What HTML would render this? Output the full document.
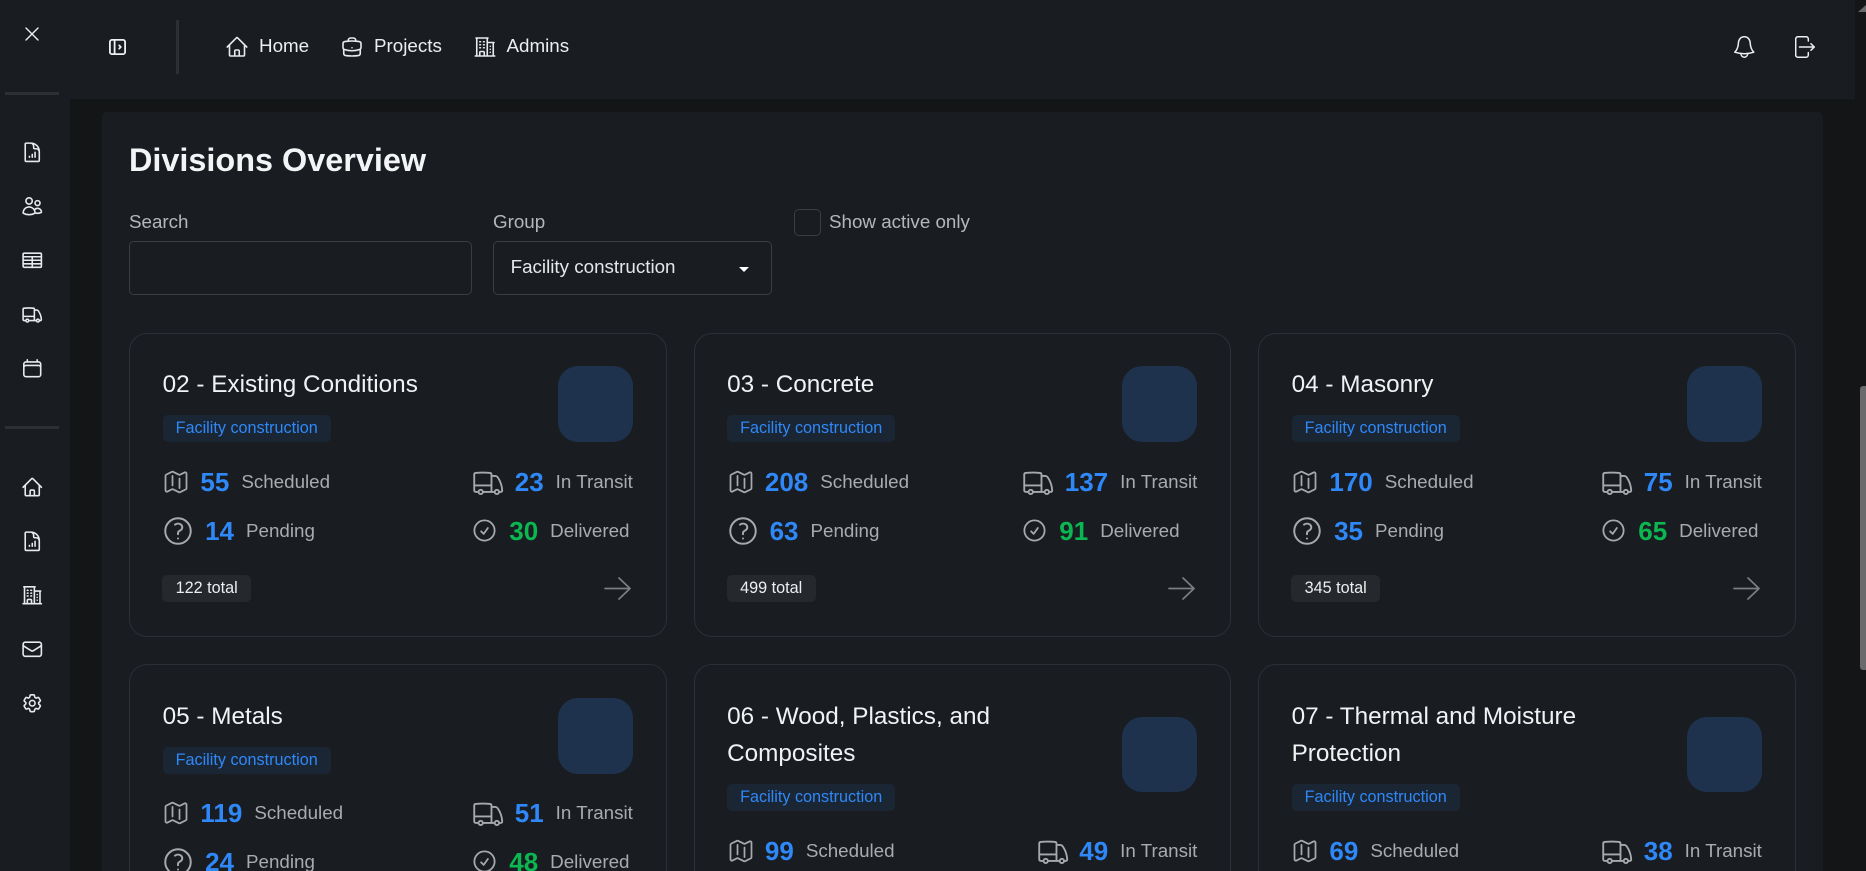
<!DOCTYPE html>
<html lang="en">
<head>
<meta charset="utf-8">
<title>Divisions Overview</title>
<style>
*{box-sizing:border-box}
html,body{margin:0;padding:0;width:1866px;height:871px;overflow:hidden;background:#131517;font-family:"Liberation Sans",sans-serif}
#root{position:relative;width:1866px;height:871px;overflow:hidden;background:#131517}
svg{display:block;fill:none;stroke:currentColor;stroke-linecap:round;stroke-linejoin:round}
.abs{position:absolute}
#side{position:absolute;left:0;top:0;width:70px;height:871px;background:#191c21}
#head{position:absolute;left:70px;top:0;width:1785px;height:99px;background:#191c21}
.sbar{position:absolute;left:5px;width:54px;height:3px;background:#2c2f34}
.si{position:absolute;left:20.75px;width:22.5px;height:22.5px;color:#e8eaed;stroke-width:1.7}
.nav{position:absolute;top:33.8px;line-height:24px;font-size:18.8px;color:#eceef1;white-space:nowrap}
.ni{position:absolute;top:35px;width:24px;height:24px;color:#e8eaed;stroke-width:1.6}
#panel{position:absolute;left:102px;top:112px;width:1721px;height:759px;background:#191c21;border-radius:5px 5px 0 0}
.lab{position:absolute;font-size:18.8px;line-height:24px;color:#b5b7ba;white-space:nowrap}
.inp{position:absolute;top:241px;height:53.7px;border:1px solid #3a3d42;border-radius:5px}
#grid{position:absolute;left:129px;top:333.3px;width:1666.5px;display:grid;grid-template-columns:repeat(3,1fr);grid-template-rows:303.4px auto;gap:27.6px 27px}
.card{border:1px solid #2c2f35;border-radius:18px;padding:31.8px 32.6px 30px 32.6px;background:#191c21;position:relative;min-width:0}
.card.lo{padding-top:32.8px}
.top{display:flex;justify-content:space-between;align-items:center}
.tt{font-size:24.3px;line-height:37px;color:#f1f2f4;white-space:nowrap}
.bd{display:inline-block;margin-top:12px;height:27px;line-height:26px;padding:0 13px;background:#1b2634;color:#2f88f8;font-size:16.2px;border-radius:5px;white-space:nowrap}
.av{width:75px;height:75.7px;border-radius:20px;background:#1e324e;flex:none}
.stats{display:flex;justify-content:space-between;margin-top:25px}
.col{display:flex;flex-direction:column;gap:18.5px}
.r{display:flex;align-items:center;height:30px;color:#a7a9ac}
.r b{font-size:26px;color:#2f88f8;line-height:30px;margin-right:12px}
.r b.g{color:#0bb750}
.r span{font-size:18.8px;color:#a9abae;line-height:24px;white-space:nowrap}
.i1{width:28px;height:28px;margin-left:-.5px;margin-right:10.3px;stroke-width:1.5}
.i2{width:34px;height:34px;margin-left:-1.5px;margin-right:10px;stroke-width:1.4}
.i3{width:34.5px;height:34.5px;margin-right:9px;stroke-width:1.3}
.i4{width:27px;height:27px;margin-right:11px;stroke-width:1.6}
.foot{position:absolute;left:32.3px;top:240.5px;height:27px;line-height:26px;padding:0 13.3px;background:#25282d;color:#eceef0;font-size:16.2px;border-radius:5px;white-space:nowrap}
.arr{position:absolute;right:35px;top:242.5px;width:27px;height:23px;color:#7c7e82;stroke-width:1.7}
#track{position:absolute;left:1855px;top:0;width:11px;height:871px;background:#131517}
#thumb{position:absolute;left:1860px;top:386px;width:6px;height:284px;background:#6a6a6c;border-radius:3px 0 0 3px}
#tri{position:absolute;left:1858px;top:5px;width:0;height:0;border-left:8px solid transparent;border-bottom:7px solid #6a6a6c}
</style>
</head>
<body>
<div id="root">
<svg width="0" height="0" style="position:absolute">
<defs>
<symbol id="home" viewBox="0 0 24 24"><path d="M2.25 12l8.954-8.955c.44-.439 1.152-.439 1.591 0L21.75 12M4.5 9.75v10.125c0 .621.504 1.125 1.125 1.125H9.75v-4.875c0-.621.504-1.125 1.125-1.125h2.25c.621 0 1.125.504 1.125 1.125V21h4.125c.621 0 1.125-.504 1.125-1.125V9.75M8.25 21h8.25"/></symbol>
<symbol id="brief" viewBox="0 0 24 24"><path d="M20.25 14.15v4.25c0 1.094-.787 2.036-1.872 2.18-2.087.277-4.216.42-6.378.42s-4.291-.143-6.378-.42c-1.085-.144-1.872-1.086-1.872-2.18v-4.25m16.5 0a2.18 2.18 0 00.75-1.661V8.706c0-1.081-.768-2.015-1.837-2.175a48.114 48.114 0 00-3.413-.387m4.5 8.006c-.194.165-.42.295-.673.38A23.978 23.978 0 0112 15.75c-2.648 0-5.195-.429-7.577-1.22a2.016 2.016 0 01-.673-.38m0 0A2.18 2.18 0 013 12.489V8.706c0-1.081.768-2.015 1.837-2.175a48.111 48.111 0 013.413-.387m7.5 0V5.25A2.25 2.25 0 0013.5 3h-3a2.25 2.25 0 00-2.25 2.25v.894m7.5 0a48.667 48.667 0 00-7.5 0M12 12.75h.008v.008H12v-.008z"/></symbol>
<symbol id="bldg" viewBox="0 0 24 24"><path d="M2.25 21h19.5m-18-18v18m10.5-18v18m6-13.5V21M6.75 6.75h.75m-.75 3h.75m-.75 3h.75m3-6h.75m-.75 3h.75m-.75 3h.75M6.75 21v-3.375c0-.621.504-1.125 1.125-1.125h2.25c.621 0 1.125.504 1.125 1.125V21M3 3h12m-.75 4.5H21m-3.75 3.75h.008v.008h-.008v-.008zm0 3h.008v.008h-.008v-.008zm0 3h.008v.008h-.008v-.008z"/></symbol>
<symbol id="map" viewBox="0 0 24 24"><path d="M9 6.75V15m6-6v8.25m.503 3.498l4.875-2.437c.381-.19.622-.58.622-1.006V4.82c0-.836-.88-1.38-1.628-1.006l-3.869 1.934c-.317.159-.69.159-1.006 0L9.503 3.252a1.125 1.125 0 00-1.006 0L3.622 5.689C3.24 5.88 3 6.27 3 6.695V19.18c0 .836.88 1.38 1.628 1.006l3.869-1.934c.317-.159.69-.159 1.006 0l4.994 2.497c.317.158.69.158 1.006 0z"/></symbol>
<symbol id="truck" viewBox="0 0 24 24"><path d="M8.25 18.75a1.5 1.5 0 01-3 0m3 0a1.5 1.5 0 00-3 0m3 0h6m-9 0H3.375a1.125 1.125 0 01-1.125-1.125V14.25m17.25 4.5a1.5 1.5 0 01-3 0m3 0a1.5 1.5 0 00-3 0m3 0h1.125c.621 0 1.129-.504 1.09-1.124a17.902 17.902 0 00-3.213-9.193 2.056 2.056 0 00-1.58-.86H14.25M16.5 18.75h-2.25m0-11.177v-.958c0-.568-.422-1.048-.987-1.106a48.554 48.554 0 00-10.026 0 1.106 1.106 0 00-.987 1.106v7.635m12-6.677v6.677m0 4.5v-4.5m0 0h-12"/></symbol>
<symbol id="q" viewBox="0 0 24 24"><path d="M9.879 7.519c1.171-1.025 3.071-1.025 4.242 0 1.172 1.025 1.172 2.687 0 3.712-.203.179-.43.326-.67.442-.745.361-1.45.999-1.45 1.827v.75M21 12a9 9 0 11-18 0 9 9 0 0118 0zm-9 5.25h.008v.008H12v-.008z"/></symbol>
<symbol id="ok" viewBox="0 0 24 24"><path d="M9 12.75L11.25 15 15 9.75M21 12a9 9 0 11-18 0 9 9 0 0118 0z"/></symbol>
<symbol id="gear" viewBox="0 0 24 24"><path d="M9.594 3.94c.09-.542.56-.94 1.11-.94h2.593c.55 0 1.02.398 1.11.94l.213 1.281c.063.374.313.686.645.87.074.04.147.083.22.127.324.196.72.257 1.075.124l1.217-.456a1.125 1.125 0 011.37.49l1.296 2.247a1.125 1.125 0 01-.26 1.431l-1.003.827c-.293.24-.438.613-.431.992a6.759 6.759 0 010 .255c-.007.378.138.75.43.99l1.005.828c.424.35.534.954.26 1.43l-1.298 2.247a1.125 1.125 0 01-1.369.491l-1.217-.456c-.355-.133-.75-.072-1.076.124a6.57 6.57 0 01-.22.128c-.331.183-.581.495-.644.869l-.213 1.28c-.09.543-.56.941-1.11.941h-2.594c-.55 0-1.02-.398-1.11-.94l-.213-1.281c-.062-.374-.312-.686-.644-.87a6.52 6.52 0 01-.22-.127c-.325-.196-.72-.257-1.076-.124l-1.217.456a1.125 1.125 0 01-1.369-.49l-1.297-2.247a1.125 1.125 0 01.26-1.431l1.004-.827c.292-.24.437-.613.43-.992a6.932 6.932 0 010-.255c.007-.378-.138-.75-.43-.99l-1.004-.828a1.125 1.125 0 01-.26-1.43l1.297-2.247a1.125 1.125 0 011.37-.491l1.216.456c.356.133.751.072 1.076-.124.072-.044.146-.087.22-.128.332-.183.582-.495.644-.869l.214-1.281z"/><path d="M15 12a3 3 0 11-6 0 3 3 0 016 0z"/></symbol>
<symbol id="mail" viewBox="0 0 24 24"><path d="M21.75 6.75v10.5a2.25 2.25 0 01-2.25 2.25h-15a2.25 2.25 0 01-2.25-2.25V6.75m19.5 0A2.25 2.25 0 0019.5 4.5h-15a2.25 2.25 0 00-2.25 2.25m19.5 0v.243a2.25 2.25 0 01-1.07 1.916l-7.5 4.615a2.25 2.25 0 01-2.36 0L3.32 8.91a2.25 2.25 0 01-1.07-1.916V6.75"/></symbol>
<symbol id="users" viewBox="0 0 24 24"><path d="M15 19.128a9.38 9.38 0 002.625.372 9.337 9.337 0 004.121-.952 4.125 4.125 0 00-7.533-2.493M15 19.128v-.003c0-1.113-.285-2.16-.786-3.07M15 19.128v.106A12.318 12.318 0 018.624 21c-2.331 0-4.512-.645-6.374-1.766l-.001-.109a6.375 6.375 0 0111.964-3.07M12 6.375a3.375 3.375 0 11-6.75 0 3.375 3.375 0 016.75 0zm8.25 2.25a2.625 2.625 0 11-5.25 0 2.625 2.625 0 015.25 0z"/></symbol>
<symbol id="table" viewBox="0 0 24 24"><rect x="2.25" y="4.5" width="19.5" height="15" rx="1.125"/><path d="M2.25 8.25h19.5M2.25 12h19.5M2.25 15.75h19.5M12 8.25V19.5"/></symbol>
<symbol id="cal" viewBox="0 0 24 24"><path d="M6.75 3v2.25M17.25 3v2.25M3 18.75V7.5a2.25 2.25 0 012.25-2.25h13.5A2.25 2.25 0 0121 7.5v11.25m-18 0A2.25 2.25 0 005.25 21h13.5A2.25 2.25 0 0021 18.75m-18 0v-7.5A2.25 2.25 0 015.25 9h13.5A2.25 2.25 0 0121 11.25v7.5"/></symbol>
<symbol id="doc" viewBox="0 0 24 24"><path d="M19.5 14.25v-2.625a3.375 3.375 0 00-3.375-3.375h-1.5A1.125 1.125 0 0113.5 7.125v-1.5a3.375 3.375 0 00-3.375-3.375H8.25M9 16.5v.75m3-3v3M15 12v5.25m-4.5-15H5.625c-.621 0-1.125.504-1.125 1.125v17.25c0 .621.504 1.125 1.125 1.125h12.75c.621 0 1.125-.504 1.125-1.125V11.25a9 9 0 00-9-9z"/></symbol>
<symbol id="arrow" viewBox="0 0 27 23"><path d="M1 11.5h25M15 1l11 10.5L15 22"/></symbol>
</defs>
</svg>

<div id="track"></div>
<div id="tri"></div>
<div id="thumb"></div>

<div id="head"></div>
<div id="side"></div>

<svg class="abs" style="left:24px;top:26px;width:16px;height:16px;color:#eceef1;stroke-width:1.4" viewBox="0 0 16 16"><path d="M2 2l12 12M14 2L2 14"/></svg>
<div class="sbar" style="top:92px"></div>
<svg class="si" style="top:140.7px"><use href="#doc"/></svg>
<svg class="si" style="top:194.7px"><use href="#users"/></svg>
<svg class="si" style="top:248.8px"><use href="#table"/></svg>
<svg class="si" style="top:303.3px"><use href="#truck"/></svg>
<svg class="si" style="top:357.4px"><use href="#cal"/></svg>
<div class="sbar" style="top:426px"></div>
<svg class="si" style="top:475.5px"><use href="#home"/></svg>
<svg class="si" style="top:530px"><use href="#doc"/></svg>
<svg class="si" style="top:584px"><use href="#bldg"/></svg>
<svg class="si" style="top:638px"><use href="#mail"/></svg>
<svg class="si" style="top:692px"><use href="#gear"/></svg>

<svg class="abs" style="left:109px;top:39px;width:17px;height:16px;color:#eef0f2;stroke-width:1.8" viewBox="0 0 17 16"><rect x=".9" y=".9" width="15.2" height="14.2" rx="2"/><path d="M5.6 .9v14.2M10.2 6.4l1.6 1.6-1.6 1.6"/></svg>
<div class="abs" style="left:176px;top:20px;width:3px;height:54px;background:#2c2f34"></div>

<svg class="ni" style="left:225px"><use href="#home"/></svg>
<div class="nav" style="left:259px">Home</div>
<svg class="ni" style="left:340px"><use href="#brief"/></svg>
<div class="nav" style="left:374px">Projects</div>
<svg class="ni" style="left:473px"><use href="#bldg"/></svg>
<div class="nav" style="left:506.5px">Admins</div>

<svg class="abs" style="left:1734px;top:36px;width:21px;height:22px;color:#eceef1;stroke-width:1.5" viewBox="0 0 21 22"><path d="M10.3 .8C6.6 .8 4.6 3.6 4.4 7c-.2 4-1 6.6-3.6 9.2 3 1 6.2 1.5 9.5 1.5s6.5-.5 9.5-1.5c-2.6-2.6-3.4-5.2-3.6-9.2C16 3.6 14 .8 10.3 .8zM6.8 17.4c.2 2.2 1.6 3.8 3.5 3.8s3.3-1.6 3.5-3.8"/></svg>
<svg class="abs" style="left:1795px;top:36px;width:20px;height:22px;color:#eceef1;stroke-width:1.5" viewBox="0 0 20 22"><path d="M13.3 5V3A2.3 2.3 0 0 0 11 .7H3A2.3 2.3 0 0 0 .7 3v16A2.3 2.3 0 0 0 3 21.3h8a2.3 2.3 0 0 0 2.3-2.3v-2.5M4.5 11h14.8M16 7.8l3.3 3.2-3.3 3.2"/></svg>

<div id="panel"></div>

<div class="abs" style="left:129px;top:139.8px;line-height:40px;font-size:32.4px;font-weight:bold;color:#f3f4f6;white-space:nowrap">Divisions Overview</div>

<div class="lab" style="left:129px;top:209.8px">Search</div>
<div class="inp" style="left:129px;width:343px"></div>
<div class="lab" style="left:493px;top:209.8px">Group</div>
<div class="inp" style="left:493px;width:278.7px"></div>
<div class="abs" style="left:510.6px;top:254.8px;line-height:24px;font-size:18.8px;color:#e6e7e9;white-space:nowrap">Facility construction</div>
<div class="abs" style="left:739px;top:266.7px;width:0;height:0;border-left:5px solid transparent;border-right:5px solid transparent;border-top:5.5px solid #fff"></div>
<div class="abs" style="left:794px;top:209px;width:27px;height:27px;border:1px solid #3a3d42;border-radius:5px"></div>
<div class="lab" style="left:829px;top:209.5px">Show active only</div>

<div id="grid">

<div class="card">
<div class="top"><div><div class="tt">02 - Existing Conditions</div><div class="bd">Facility construction</div></div><div class="av"></div></div>
<div class="stats">
<div class="col">
<div class="r"><svg class="i1"><use href="#map"/></svg><b>55</b><span>Scheduled</span></div>
<div class="r"><svg class="i2"><use href="#q"/></svg><b>14</b><span>Pending</span></div>
</div>
<div class="col">
<div class="r"><svg class="i3"><use href="#truck"/></svg><b>23</b><span>In Transit</span></div>
<div class="r"><svg class="i4"><use href="#ok"/></svg><b class="g">30</b><span>Delivered</span></div>
</div>
</div>
<div class="foot">122 total</div>
<svg class="arr"><use href="#arrow"/></svg>
</div>

<div class="card">
<div class="top"><div><div class="tt">03 - Concrete</div><div class="bd">Facility construction</div></div><div class="av"></div></div>
<div class="stats">
<div class="col">
<div class="r"><svg class="i1"><use href="#map"/></svg><b>208</b><span>Scheduled</span></div>
<div class="r"><svg class="i2"><use href="#q"/></svg><b>63</b><span>Pending</span></div>
</div>
<div class="col">
<div class="r"><svg class="i3"><use href="#truck"/></svg><b>137</b><span>In Transit</span></div>
<div class="r"><svg class="i4"><use href="#ok"/></svg><b class="g">91</b><span>Delivered</span></div>
</div>
</div>
<div class="foot">499 total</div>
<svg class="arr"><use href="#arrow"/></svg>
</div>

<div class="card">
<div class="top"><div><div class="tt">04 - Masonry</div><div class="bd">Facility construction</div></div><div class="av"></div></div>
<div class="stats">
<div class="col">
<div class="r"><svg class="i1"><use href="#map"/></svg><b>170</b><span>Scheduled</span></div>
<div class="r"><svg class="i2"><use href="#q"/></svg><b>35</b><span>Pending</span></div>
</div>
<div class="col">
<div class="r"><svg class="i3"><use href="#truck"/></svg><b>75</b><span>In Transit</span></div>
<div class="r"><svg class="i4"><use href="#ok"/></svg><b class="g">65</b><span>Delivered</span></div>
</div>
</div>
<div class="foot">345 total</div>
<svg class="arr"><use href="#arrow"/></svg>
</div>

<div class="card lo">
<div class="top"><div><div class="tt">05 - Metals</div><div class="bd">Facility construction</div></div><div class="av"></div></div>
<div class="stats" style="margin-top:24px">
<div class="col">
<div class="r"><svg class="i1"><use href="#map"/></svg><b>119</b><span>Scheduled</span></div>
<div class="r"><svg class="i2"><use href="#q"/></svg><b>24</b><span>Pending</span></div>
</div>
<div class="col">
<div class="r"><svg class="i3"><use href="#truck"/></svg><b>51</b><span>In Transit</span></div>
<div class="r"><svg class="i4"><use href="#ok"/></svg><b class="g">48</b><span>Delivered</span></div>
</div>
</div>
</div>

<div class="card lo">
<div class="top"><div><div class="tt">06 - Wood, Plastics, and<br>Composites</div><div class="bd">Facility construction</div></div><div class="av"></div></div>
<div class="stats">
<div class="col">
<div class="r"><svg class="i1"><use href="#map"/></svg><b>99</b><span>Scheduled</span></div>
</div>
<div class="col">
<div class="r"><svg class="i3"><use href="#truck"/></svg><b>49</b><span>In Transit</span></div>
</div>
</div>
</div>

<div class="card lo">
<div class="top"><div><div class="tt">07 - Thermal and Moisture<br>Protection</div><div class="bd">Facility construction</div></div><div class="av"></div></div>
<div class="stats">
<div class="col">
<div class="r"><svg class="i1"><use href="#map"/></svg><b>69</b><span>Scheduled</span></div>
</div>
<div class="col">
<div class="r"><svg class="i3"><use href="#truck"/></svg><b>38</b><span>In Transit</span></div>
</div>
</div>
</div>

</div>
</div>
</body>
</html>
